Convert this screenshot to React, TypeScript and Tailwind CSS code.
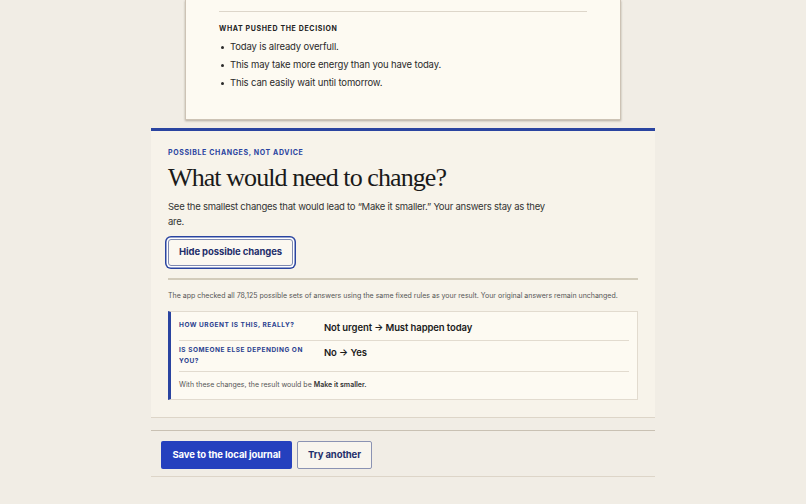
import React from "react";

const reasons = [
  "Today is already overfull.",
  "This may take more energy than you have today.",
  "This can easily wait until tomorrow.",
];

const changes = [
  { q: "How urgent is this, really?", from: "Not urgent", to: "Must happen today" },
  { q: "Is someone else depending on you?", from: "No", to: "Yes" },
];

export default function App() {
  return (
    <div className="min-h-[504px] bg-[#f1ede5] font-['Inter',sans-serif] text-[#1c1c1c]">
      <div className="mx-auto flex w-[504px] flex-col">
        {/* result card, scrolled so its top is out of view */}
        <div className="mx-auto w-[436px] border-x border-b border-[#cdc3b5] bg-[#fdfaf2] px-[33px] pt-[11px] pb-[27px] shadow-[0_1px_2px_rgba(60,45,30,0.35)]">
          <div className="h-px bg-[#ddd6ca]" />
          <div className="mt-[12px] text-[7px] font-bold uppercase leading-[10px] tracking-[0.09em] text-[#222]">
            What pushed the decision
          </div>
          <ul className="mt-[4px] flex flex-col">
            {reasons.map((r) => (
              <li key={r} className="flex items-center text-[9.5px] leading-[18px] tracking-[-0.015em] text-[#2a2a2a]">
                <span className="ml-[2px] mr-[6px] h-[3px] w-[3px] rounded-full bg-[#2a2a2a]" />
                {r}
              </li>
            ))}
          </ul>
        </div>

        {/* possible changes */}
        <section className="mt-[8px] border-t-[3px] border-b border-t-[#2a44a0] border-b-[#ddd5c8] bg-[#f7f3ea] px-[17px] pt-[17px] pb-[17px]">
          <div className="text-[7px] font-bold uppercase leading-[10px] tracking-[0.09em] text-[#2a44a0]">
            Possible changes, not advice
          </div>
          <h2 className="mt-[4px] font-['Liberation_Serif',serif] text-[26px] leading-[32px] tracking-[-0.035em] text-[#1a1a1a]">
            What would need to change?
          </h2>
          <p className="mt-[5px] w-[388px] text-[9.5px] leading-[15px] tracking-[-0.025em] text-[#333]">
            See the smallest changes that would lead to “Make it smaller.” Your answers stay as they are.
          </p>
          <button className="mt-[10px] h-[27px] w-[125px] rounded-[3px] border border-[#7f89b0] bg-[#fbf8f1] text-[9.5px] font-bold tracking-[-0.01em] text-[#1f2f6b] shadow-[0_0_0_1.5px_#ffffff,0_0_0_3px_#2a44a0]">
            Hide possible changes
          </button>
          <div className="mt-[12px] h-[2px] bg-[#d3ccbb]" />
          <p className="mt-[10px] text-[7px] leading-[12px] text-[#555]">
            The app checked all 78,125 possible sets of answers using the same fixed rules as your result. Your original answers remain unchanged.
          </p>
          <div className="mt-[9px] border border-l-[3px] border-[#e2dbcf] border-l-[#2a44a0] bg-[#fdfaf2] px-[8px] py-[4px]">
            {changes.map((c) => (
              <div key={c.q} className="grid grid-cols-[130px_1fr] items-start gap-x-[15px] border-b border-[#e2dbcf] py-[4px]">
                <div className="text-[6.5px] font-bold uppercase leading-[11px] tracking-[0.08em] text-[#2a3f8f]">
                  {c.q}
                </div>
                <div className="text-[9.5px] font-semibold leading-[16px] tracking-[-0.01em] text-[#1a1a1a]">
                  {c.from} → {c.to}
                </div>
              </div>
            ))}
            <p className="pt-[7px] pb-[4px] text-[7px] leading-[12px] text-[#555]">
              With these changes, the result would be <b className="font-semibold text-[#333]">Make it smaller.</b>
            </p>
          </div>
        </section>

        {/* actions */}
        <div className="mt-[12px] flex gap-[5px] border-y border-t-[#c9c1b3] border-b-[#ddd5c8] px-[10px] pt-[10px] pb-[7px]">
          <button className="h-[28px] w-[131px] rounded-[2px] bg-[#2540be] text-[9.5px] font-bold tracking-[-0.01em] text-white">
            Save to the local journal
          </button>
          <button className="h-[28px] w-[75px] rounded-[2px] border border-[#8b93b3] bg-[#f8f5ee] text-[9.5px] font-bold tracking-[-0.01em] text-[#1f2f6b]">
            Try another
          </button>
        </div>
      </div>
    </div>
  );
}
